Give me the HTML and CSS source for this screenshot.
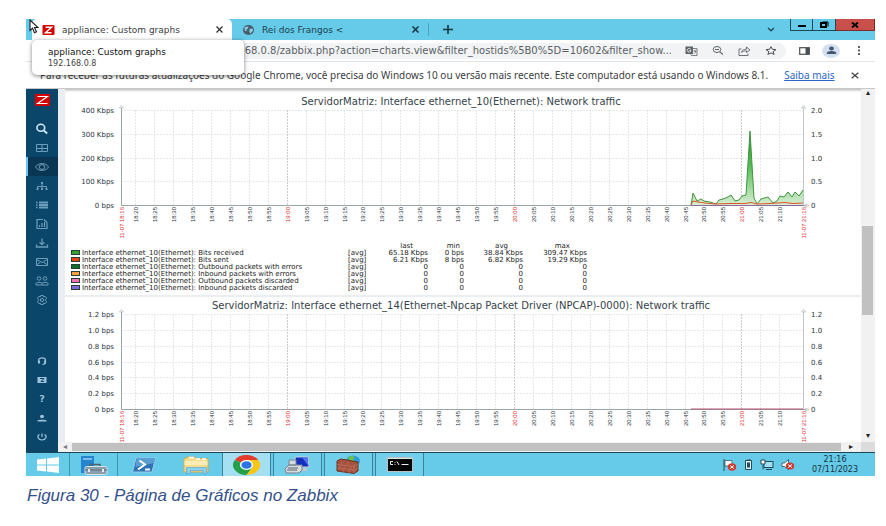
FILE: index.html
```html
<!DOCTYPE html>
<html lang="pt-BR">
<head>
<meta charset="utf-8">
<title>appliance: Custom graphs</title>
<link rel="stylesheet" href="styles.css">
</head>
<body>
<figure class="figure">
  <div class="desktop">
    <header class="tabstrip">
      <div class="tab tab-active">
        <svg class="favicon" viewBox="0 0 12 10"><rect width="12" height="10" rx="1" fill="#d40000"/><path d="M3 2.200h6L3 7.800h6" fill="none" stroke="#fff" stroke-width="1.500"/></svg>
        <span class="tab-title">appliance: Custom graphs</span>
        <button class="plain" aria-label="Fechar guia"><svg width="7" height="7" viewBox="0 0 7 7"><path d="M.5.5l6 6M6.500.5l-6 6" stroke="#333" stroke-width="1.300"/></svg></button>
      </div>
      <div class="tab">
        <svg class="favicon" viewBox="0 0 12 10"><ellipse cx="6" cy="5" rx="5.500" ry="5" fill="#46606e"/><path d="M2 2.500l3-1 1 1.500-2 1 .5 1.500-2 .5zM7 4l3-.5.5 2L8 8.500 7 7z" fill="#8fd0e8"/></svg>
        <span class="tab-title">Rei dos Frangos &lt;</span>
        <button class="plain" aria-label="Fechar guia"><svg width="7" height="7" viewBox="0 0 7 7"><path d="M.5.5l6 6M6.500.5l-6 6" stroke="#16333f" stroke-width="1.500"/></svg></button>
      </div>
      <button class="plain new-tab" aria-label="Nova guia"><svg width="10" height="9" viewBox="0 0 10 9"><path d="M5 0v9M0 4.500h10" stroke="#16333f" stroke-width="1.600"/></svg></button>
      <div class="window-controls">
        <button class="plain tab-search" aria-label="Pesquisar guias"><svg width="8" height="5" viewBox="0 0 8 5"><path d="M1 1l3 2.800L7 1" fill="none" stroke="#23424f" stroke-width="1.300"/></svg></button>
        <button class="win" aria-label="Minimizar"><svg width="8" height="8" viewBox="0 0 8 8"><path d="M0 5h8" stroke="#000" stroke-width="2"/></svg></button>
        <button class="win" aria-label="Restaurar"><svg width="9" height="8" viewBox="0 0 9 8"><path d="M2.500 1h5.500v4.500" fill="none" stroke="#000" stroke-width="1"/><rect x="1" y="2" width="5" height="4" fill="none" stroke="#000" stroke-width="2"/></svg></button>
        <button class="win win-close" aria-label="Fechar"><svg width="8" height="6" viewBox="0 0 8 6"><path d="M1 .5l6 5M7 .5l-6 5" stroke="#000" stroke-width="1.800"/></svg></button>
      </div>
    </header>

    <div class="toolbar">
      <div class="address">
        <input class="url" aria-label="Endereço" value="192.168.0.8/zabbix.php?action=charts.view&amp;filter_hostids%5B0%5D=10602&amp;filter_show...">
        <button class="plain" aria-label="Traduzir"><svg width="13" height="10" viewBox="0 0 13 10"><rect x=".5" y=".5" width="7.500" height="7.500" fill="#5f6368"/><path d="M5.800 3.200a2 1.800 0 1 0 0 2.200V4.500H4.300" fill="none" stroke="#fff" stroke-width=".8"/><path d="M8 2.500h4v7H6.500L5.500 8M8.500 5h3M10 4v1M9 7.800c1-.6 1.500-1.600 1.700-2.800" fill="none" stroke="#5f6368" stroke-width=".8"/></svg></button>
        <button class="plain" aria-label="Zoom"><svg width="12" height="9" viewBox="0 0 12 9"><ellipse cx="5" cy="3.500" rx="3.800" ry="3" fill="none" stroke="#5f6368"/><path d="M3 3.500h4M7.800 5.800l3.200 2.700" stroke="#5f6368" stroke-width="1.100"/></svg></button>
        <button class="plain" aria-label="Compartilhar"><svg width="13" height="10" viewBox="0 0 13 10"><path d="M3.500 3H1v6.500h9V7.500M3.500 6.500C4 4 6 3.200 8.500 3.200V1L12 4 8.500 6.500V4.800C6.500 4.800 5 5.200 3.500 6.500z" fill="none" stroke="#5f6368" stroke-width=".9"/></svg></button>
        <button class="plain" aria-label="Favoritos"><svg width="12" height="9" viewBox="0 0 12 9"><path d="M6 .7l1.400 2.600 3.600.3-2.800 2 .9 2.800L6 6.900 2.900 8.400l.9-2.800L1 3.600l3.600-.3z" fill="none" stroke="#4a4e52" stroke-width="1"/></svg></button>
      </div>
      <button class="plain" aria-label="Painel lateral"><svg width="11" height="8" viewBox="0 0 11 8"><rect x=".7" y=".7" width="9.600" height="6.600" fill="none" stroke="#4a4e52" stroke-width="1.200"/><path d="M6.500 1h3.500v6H6.500z" fill="#4a4e52"/></svg></button>
      <button class="plain avatar" aria-label="Perfil"><svg width="11" height="9" viewBox="0 0 11 9"><ellipse cx="5.500" cy="2.500" rx="2.400" ry="2" fill="#45556b"/><path d="M.8 8V7c0-1.300 3-2 4.700-2s4.700.7 4.700 2v1z" fill="#45556b"/></svg></button>
      <button class="plain" aria-label="Menu"><svg width="4" height="9" viewBox="0 0 4 9"><path d="M1 0h2v2H1zM1 3.500h2v2H1zM1 7h2v2H1z" fill="#5f6368"/></svg></button>
    </div>

    <div class="infobar">
      <p>Para receber as futuras atualizações do Google Chrome, você precisa do Windows 10 ou versão mais recente. Este computador está usando o Windows 8.1.</p>
      <a href="#">Saiba mais</a>
      <button class="plain" aria-label="Dispensar"><svg width="8" height="7" viewBox="0 0 8 7"><path d="M.7.7l6.600 5.600M7.300.7L.7 6.300" stroke="#444" stroke-width="1.200"/></svg></button>
    </div>

    <div class="tooltip" role="tooltip"><strong>appliance: Custom graphs</strong><span>192.168.0.8</span></div>
    <svg class="pointer" width="10" height="15" viewBox="0 0 10 15"><path d="M1 1v10.500l2.500-2.300 2 4.600 2-1-2-4.300H9z" fill="#fff" stroke="#1a1a1a" stroke-width="1.100"/></svg>

    <div class="page">
      <nav class="sidebar" aria-label="Zabbix">
        <a href="#" class="logo" aria-label="Zabbix"><svg width="15" height="12" viewBox="0 0 15 12"><rect width="15" height="12" fill="#d40000"/><path d="M2.500 2.500h10L2.500 9.500h10" fill="none" stroke="#fff" stroke-width="1.100"/></svg></a>
        <ul class="menu">
          <li><a href="#" class="bright" aria-label="Pesquisar"><svg viewBox="0 0 14 12"><ellipse cx="5.800" cy="4.800" rx="3.900" ry="3.500" stroke-width="1.600"/><path d="M8.800 7.500l3.400 3" stroke-width="1.800"/></svg></a></li>
          <li><a href="#" aria-label="Painéis"><svg viewBox="0 0 14 12"><path d="M1.500 2.500h11v7h-11zM7 2.500v7M1.500 6.500H7M7 6.500h5.500"/></svg></a></li>
          <li><a href="#" class="current" aria-label="Monitoramento"><svg viewBox="0 0 14 12"><path d="M.5 6C3 1.500 11 1.500 13.500 6 11 10.500 3 10.500.5 6z"/><ellipse cx="7" cy="6" rx="2.800" ry="2.400"/></svg></a></li>
          <li><a href="#" aria-label="Serviços"><svg viewBox="0 0 14 12"><path d="M7 3.500v5M2.500 8.500v-2h9v2"/><path d="M6 2h2v2H6zM1.500 8h2v2h-2zM6 8h2v2H6zM10.500 8h2v2h-2z" class="solid"/></svg></a></li>
          <li><a href="#" aria-label="Inventário"><svg viewBox="0 0 14 12"><path d="M4 3.500h9M4 6h9M4 8.500h9" stroke-width="1.900"/><path d="M1 3.500h1.500M1 6h1.500M1 8.500h1.500" stroke-width="1.500"/></svg></a></li>
          <li><a href="#" aria-label="Relatórios"><svg viewBox="0 0 14 12"><path d="M8 1.500H2v9h10V4.500M4.500 9V7M7 9V5M9.500 9V4M9 1.500l3 3" stroke-width="1.200"/></svg></a></li>
          <li><a href="#" aria-label="Coleta de dados"><svg viewBox="0 0 14 12"><path d="M1.500 7.500v2.500h11V7.500M7 1.500v6M4.500 5.500L7 7.500l2.500-2" stroke-width="1.300"/></svg></a></li>
          <li><a href="#" aria-label="Alertas"><svg viewBox="0 0 14 12"><path d="M1.500 2.500h11v7h-11zM1.500 3.500L7 6.500l5.500-3M1.500 9l4-3M12.500 9l-4-3"/></svg></a></li>
          <li><a href="#" aria-label="Usuários"><svg viewBox="0 0 14 12"><ellipse cx="4" cy="3.500" rx="1.900" ry="1.700"/><ellipse cx="10" cy="3.500" rx="1.900" ry="1.700"/><path d="M1 10V8.500C1 7 7 7 7 8.500V10M7 8.500C7 7 13 7 13 8.500V10M1 10h12"/></svg></a></li>
          <li><a href="#" aria-label="Administração"><svg viewBox="0 0 14 12"><path d="M5.800 1.500h2.400l.4 1.300 1.700-.3 1.300 1.700-1 1.100v1.400l1 1.100-1.300 1.700-1.700-.3-.4 1.300H5.800l-.4-1.300-1.700.3-1.300-1.700 1-1.100V5.300l-1-1.100 1.300-1.700 1.700.3z"/><ellipse cx="7" cy="6" rx="1.700" ry="1.500"/></svg></a></li>
        </ul>
        <ul class="menu menu-bottom">
          <li><a href="#" aria-label="Suporte"><svg viewBox="0 0 14 12"><path d="M3.500 7V5.500C3.500 2 10.500 2 10.500 5.500V7M10.500 7.500c0 1.500-1 1.800-3 1.800" stroke-width="1.200"/><path d="M3 5.500h2v3H3zM9 5.500h2v3H9z" class="solid"/></svg></a></li>
          <li><a href="#" aria-label="Integrações"><svg viewBox="0 0 14 12"><rect x="2.500" y="3" width="9" height="6" class="solid"/><path d="M5 4.500h4L6 7.500h3" stroke="#0a466a"/></svg></a></li>
          <li><a href="#" class="help" aria-label="Ajuda">?</a></li>
          <li><a href="#" aria-label="Perfil do usuário"><svg viewBox="0 0 14 12"><ellipse cx="7" cy="4.500" rx="2" ry="1.700" class="solid"/><path d="M2.500 9.500V8.500c0-1 9-1 9 0v1z" class="solid"/></svg></a></li>
          <li><a href="#" aria-label="Sair"><svg viewBox="0 0 14 12"><path d="M4.500 3.500C1.500 5 3 9 7 9s5.500-4 2.500-5.500M7 2.500v3.500" stroke-width="1.200"/></svg></a></li>
        </ul>
      </nav>

      <div class="viewport">
        <main class="content">
          <section class="panel panel-first">
            <h2>ServidorMatriz: Interface ethernet_10(Ethernet): Network traffic</h2>
            <svg class="plot" id="plot-ethernet10"></svg>
            <table class="legend">
              <colgroup><col class="c-name"><col class="c-fn"><col class="c-last"><col class="c-min"><col class="c-avg"><col class="c-max"></colgroup>
              <thead><tr><th></th><th></th><th class="h-last">last</th><th class="h-min">min</th><th class="h-avg">avg</th><th class="h-max">max</th></tr></thead>
              <tbody>
                <tr><td><i class="key green"></i>Interface ethernet_10(Ethernet): Bits received</td><td>[avg]</td><td>65.18 Kbps</td><td>0 bps</td><td>38.84 Kbps</td><td>309.47 Kbps</td></tr>
                <tr><td><i class="key red"></i>Interface ethernet_10(Ethernet): Bits sent</td><td>[avg]</td><td>6.21 Kbps</td><td>8 bps</td><td>6.82 Kbps</td><td>19.29 Kbps</td></tr>
                <tr><td><i class="key dark"></i>Interface ethernet_10(Ethernet): Outbound packets with errors</td><td>[avg]</td><td>0</td><td>0</td><td>0</td><td>0</td></tr>
                <tr><td><i class="key orange"></i>Interface ethernet_10(Ethernet): Inbound packets with errors</td><td>[avg]</td><td>0</td><td>0</td><td>0</td><td>0</td></tr>
                <tr><td><i class="key pink"></i>Interface ethernet_10(Ethernet): Outbound packets discarded</td><td>[avg]</td><td>0</td><td>0</td><td>0</td><td>0</td></tr>
                <tr><td><i class="key violet"></i>Interface ethernet_10(Ethernet): Inbound packets discarded</td><td>[avg]</td><td>0</td><td>0</td><td>0</td><td>0</td></tr>
              </tbody>
            </table>
          </section>
          <section class="panel">
            <h2>ServidorMatriz: Interface ethernet_14(Ethernet-Npcap Packet Driver (NPCAP)-0000): Network traffic</h2>
            <svg class="plot" id="plot-ethernet14"></svg>
          </section>
        </main>
        <div class="hscroll"><span class="arrow">◂</span><span class="thumb"></span><span class="arrow dark-arrow">▸</span></div>
      </div>
      <div class="vscroll"><span class="arrow">▴</span><span class="track"><span class="thumb"></span></span><span class="arrow">▾</span><span class="corner"></span></div>
    </div>

    <footer class="taskbar">
      <button class="task start" aria-label="Iniciar"><svg width="24" height="16" viewBox="0 0 24 16"><path d="M1 2.500l9-1v6H1zM11 1.400L23 0v7.500H11zM1 8.500h9v6l-9-1zM11 8.500h12V16l-12-1.400z" fill="#fff"/></svg></button>
      <button class="task first" aria-label="Gerenciador do Servidor"><svg width="28" height="20" viewBox="0 0 28 20"><path d="M1 1h13v17H1z" fill="#2386cf"/><path d="M3 4h9" stroke="#d8f0fb"/><path d="M10 13V9.500h10V13" fill="none" stroke="#52616b" stroke-width="1.500"/><rect x="5" y="11.500" width="22" height="8" rx="1.500" fill="#8b9eac" stroke="#d5e2ea"/><path d="M5 15h22" stroke="#5b6c79"/><path d="M8 14h2v3H8zM22 14h2v3h-2z" fill="#e6edf0"/></svg></button>
      <button class="task" aria-label="PowerShell"><svg width="26" height="16" viewBox="0 0 26 16"><path d="M5 1h19.500L21 15H1.500z" fill="#2d73b5" stroke="#9ccbe9"/><path d="M5.500 1.500h18.500L23 6 4.500 10z" fill="#5b9dd2"/><path d="M8.500 3.500l5.500 4-7 5M14 12.500h5" fill="none" stroke="#fff" stroke-width="2"/></svg></button>
      <button class="task" aria-label="Explorador de Arquivos"><svg width="27" height="18" viewBox="0 0 27 18"><path d="M1 2.500h2L4 1h8l1 1.500h12V16H1z" fill="#f3dc8e" stroke="#d0ae51"/><path d="M6 1.500h5M13 3h4M19 3h4" stroke="#fff" stroke-width="1.500"/><path d="M1.500 5h23v4h-23z" fill="#fbedb5"/><path d="M3.500 17.500v-6h20v6h-3.500V14.500H7.500v3z" fill="#8bd2f2" stroke="#5aaad4" stroke-width=".7"/></svg></button>
      <button class="task active" aria-label="Google Chrome"><svg width="28" height="20" viewBox="0 0 28 20"><g transform="scale(1.350 1)"><path d="M10 10L1.400 5A9.900 9.900 0 0 1 18.700 5z" fill="#e33b2e"/><path d="M10 10L1.400 5A9.900 9.900 0 0 0 10 19.900L14.300 12.500z" fill="#24a04a"/><path d="M10 5h8.700A9.900 9.900 0 0 1 10 19.900l4.300-7.400z" fill="#fbc516"/><circle cx="10" cy="10" r="4.900" fill="#fff"/><circle cx="10" cy="10" r="3.800" fill="#2f74e0"/></g></svg></button>
      <button class="task boxed" aria-label="Área de Trabalho Remota"><svg width="27" height="18" viewBox="0 0 27 18"><path d="M11 1h13l1 10H12z" fill="#1430bf" stroke="#c8d4e2"/><path d="M18 1.500h5.500l.8 8z" fill="#5176ec"/><path d="M16 12h6l2 3h-9z" fill="#bac6d0"/><path d="M5 4h7v5H5zM1 13l4-4h13v5l-3 3H2z" fill="#d5dadd" stroke="#77838c"/><path d="M4 12h10M3 14h10" stroke="#59646c"/></svg></button>
      <button class="task boxed" aria-label="Firewall"><svg width="25" height="19" viewBox="0 0 25 19"><ellipse cx="17" cy="6" rx="7" ry="5.500" fill="#2e9cdb"/><path d="M12 2.500c3-2 5-2 7 0l-2 2.500 3 2v4h-4z" fill="#67c449"/><path d="M1 6l4-2 17 3v9l-4 2.500L1 16z" fill="#a4513e" stroke="#6f3023"/><path d="M1 9.500l17 2 4-2M1 13l17 2 4-2M6 6.500v3.500M12 7v4M4 10v3.500M9 10.500V14M15 11v4M7 13.500v3.500M13 14.500v3.500M18 9v9" stroke="#c07a66" stroke-width=".6" fill="none"/></svg></button>
      <button class="task boxed" aria-label="Prompt de Comando"><svg width="26" height="15" viewBox="0 0 26 15"><rect x=".5" y=".5" width="25" height="14" fill="#050505" stroke="#b9c1c5"/><path d="M1 1.500h24" stroke="#dfe5e7"/><path d="M6 4.500H3.500v3H6M8 5v.8M8 7v.8M10 4.500l2 3.500M14.500 7.500h7" fill="none" stroke="#eee"/></svg></button>
      <div class="tray">
        <svg width="15" height="12" viewBox="0 0 15 12"><path d="M2 0v12" stroke="#234a5a"/><path d="M3 1.500h7v5.500H3z" fill="#fff" stroke="#234a5a" stroke-width=".7"/><ellipse cx="10" cy="8" rx="4.200" ry="3.700" fill="#d33a2e"/><path d="M8.200 6.500l3.600 3M11.800 6.500l-3.600 3" stroke="#fff"/></svg>
        <svg width="9" height="11" viewBox="0 0 9 11"><path d="M1.500 1.500h6v9h-6zM3 0h3v1.500" fill="#dff4fb" stroke="#234a5a"/><path d="M3 3.500h3v5H3z" fill="#234a5a"/></svg>
        <svg width="14" height="11" viewBox="0 0 14 11"><rect x="4" y="2.500" width="9" height="6" fill="#a4e0f3" stroke="#234a5a"/><path d="M6 10.500h6M3 6v4.500" stroke="#234a5a"/><path d="M1 1h4v4H1z" fill="#fff" stroke="#234a5a"/></svg>
        <svg width="14" height="11" viewBox="0 0 14 11"><path d="M1 4h2.500l4-3.500v10L3.500 7.500H1z" fill="#fff" stroke="#234a5a" stroke-width=".8"/><ellipse cx="9" cy="7" rx="4.200" ry="3.600" fill="#d33a2e"/><path d="M7.200 5.500l3.600 3M10.800 5.500l-3.600 3" stroke="#fff"/></svg>
      </div>
      <div class="clock"><span>21:16</span><span>07/11/2023</span></div>
    </footer>
  </div>
  <figcaption>Figura 30 - Página de Gráficos no Zabbix</figcaption>
</figure>
<script src="charts.js"></script>
</body>
</html>
```
FILE: styles.css
```css
* { box-sizing: border-box; }
body {
  margin: 0;
  background: #fff;
  font-family: "DejaVu Sans", "Liberation Sans", sans-serif;
  font-size: 8px;
  color: #222;
}
.figure { margin: 19px 11px 0 26px; }
.desktop { position: relative; }
button, input { font: inherit; color: inherit; }
.plain {
  display: flex;
  align-items: center;
  justify-content: center;
  padding: 0;
  border: 0;
  background: none;
}
svg { display: block; flex: none; }

.tabstrip { display: flex; align-items: stretch; height: 21px; padding-left: 6px; background: #65cbe9; }
.tab { display: flex; align-items: center; width: 200px; padding: 0 9px 0 10px; color: #1d3c49; }
.tab-active { background: #fff; border-radius: 5px 5px 0 0; color: #3c4043; }
.tab + .tab { width: 197px; border-right: 1px solid #4aa3bf; margin: 4px 0; }
.tab-title { flex: 1; font-size: 9px; white-space: nowrap; }
.favicon { width: 13px; height: 10px; margin-right: 7px; }
.new-tab { width: 38px; }
.window-controls { display: flex; align-items: flex-start; margin-left: auto; }
.tab-search { width: 38px; height: 20px; }
.win {
  display: flex;
  align-items: center;
  justify-content: center;
  width: 23px;
  height: 12px;
  padding: 0;
  border: 1px solid #1f4653;
  border-width: 0 1px 1px 0;
  background: #65cbe9;
}
.tab-search + .win { border-left-width: 1px; }
.win-close { width: 39px; background: #c9504a; border-color: #7c2c28; }

.toolbar { display: flex; align-items: center; height: 22px; padding: 0 14px 0 110px; background: #fff; border-bottom: 1px solid #e3e5e7; }
.address { display: flex; align-items: center; gap: 14px; flex: 1; height: 16px; padding-right: 9px; border-radius: 8px; background: #f1f3f4; margin-right: 13px; }
.url { flex: 1; min-width: 0; height: 16px; padding: 0 0 0 80px; border: 0; background: none; font-size: 10px; line-height: 16px; color: #5b5f64; outline: 0; }
.avatar { width: 18px; height: 14px; margin: 0 17px 0 12px; border-radius: 50%; background: #d3e0f2; }

.infobar { display: flex; align-items: center; height: 27px; padding: 0 16px 0 14px; background: #fff; border-bottom: 1px solid #c8c8c8; font-family: "Noto Sans", sans-serif; font-size: 10px; color: #3c4043; white-space: nowrap; }
.infobar p { margin: 0; }
.infobar a { margin-left: 16px; color: #2a66c8; }
.infobar button { margin-left: auto; }

.tooltip {
  position: absolute;
  left: 6px;
  top: 21px;
  display: flex;
  flex-direction: column;
  width: 212px;
  height: 35px;
  padding: 6px 16px;
  border-radius: 5px;
  background: #fff;
  box-shadow: 0 1px 4px rgba(0, 0, 0, .5);
  line-height: 12px;
}
.tooltip strong { font-size: 9px; font-weight: 400; color: #111; }
.tooltip span { color: #444; }
.pointer { position: absolute; left: 3px; top: 0; }

.page { display: flex; height: 363px; background: #ebeef0; }
.sidebar { display: flex; flex-direction: column; width: 32px; background: #0a466a; }
.logo { display: flex; justify-content: center; padding: 5px 0 13px 1px; }
.menu { margin: 0; padding: 0; list-style: none; }
.menu-bottom { margin-top: auto; padding-bottom: 6px; }
.menu a {
  display: flex;
  align-items: center;
  justify-content: center;
  height: 19px;
  border-left: 2px solid transparent;
  padding-right: 2px;
  color: #6c9dbb;
  text-decoration: none;
}
.menu svg { width: 14px; height: 12px; fill: none; stroke: currentColor; stroke-width: 1; }
.menu .solid { fill: currentColor; stroke: none; }
.menu .bright { color: #d3e8f5; }
.menu .current { background: #083653; border-left-color: #6cc3f5; }
.menu-bottom a { color: #9dc3da; }
.menu .help { font-size: 9px; font-weight: 700; }

.viewport { display: flex; flex-direction: column; flex: 1; min-width: 0; }
.content { display: flex; flex-direction: column; gap: 2px; flex: 1; min-height: 0; overflow: hidden; padding-left: 7px; }
.panel { flex: none; padding-top: 4px; background: #fff; }
.panel-first { padding-top: 8px; height: 206px; box-shadow: inset 0 3px 3px -2px #aaa; }
.panel h2 { width: 792px; margin: 0; font-size: 10px; line-height: 10px; font-weight: 400; text-align: center; color: #36434a; white-space: nowrap; }
.plot { width: 792px; height: 132px; overflow: visible; }
.plot text { font-size: 7px; fill: #2a3338; }
.plot .time { font-family: "Liberation Sans", Arial, sans-serif; font-size: 6px; text-anchor: end; }
.plot .major { fill: #e02a2a; }

.legend { table-layout: fixed; width: 516px; height: 49px; margin: 4px 0 0 6px; border-collapse: collapse; font-size: 7px; line-height: 7px; white-space: nowrap; }
.legend td, .legend th { padding: 0; font-weight: 400; text-align: right; }
.legend td:nth-child(-n+2) { text-align: left; }
.c-name { width: 277px; }
.c-fn { width: 24px; }
.c-last { width: 56px; }
.c-min { width: 36px; }
.c-avg { width: 59px; }
.c-max { width: 64px; }
.legend .h-last, .legend .h-avg { padding-right: 15px; }
.legend .h-min { padding-right: 4px; }
.legend .h-max { padding-right: 17px; }
.key { display: inline-block; width: 9px; height: 5px; margin-right: 2px; outline: 1px solid #28403a; outline-offset: -1px; }
.green { background: #35a12c; }
.red { background: #f0420f; }
.dark { background: #0c7028; }
.orange { background: #f7a13b; }
.pink { background: #f272b0; }
.violet { background: #8168dc; }

.hscroll { display: flex; align-items: center; height: 10px; background: #f1f1f1; }
.hscroll .thumb { flex: 1; height: 8px; background: #c1c1c1; }
.arrow { width: 14px; font-size: 8px; line-height: 8px; text-align: center; color: #777; }
.hscroll .dark-arrow { width: 20px; color: #222; }
.vscroll { display: flex; flex-direction: column; width: 14px; background: #f1f1f1; }
.vscroll .arrow { height: 10px; color: #222; }
.vscroll .track { flex: 1; padding: 127px 2px 0 1px; }
.vscroll .thumb { display: block; height: 89px; background: #c1c1c1; }
.vscroll .corner { height: 10px; background: #dcdcdc; }

.taskbar { display: flex; align-items: stretch; height: 24px; border-top: 1px solid #1d4757; background: #65cbe9; }
.task { display: flex; align-items: center; justify-content: center; width: 52px; padding: 0; border: 0; background: none; }
.start { width: 43px; }
.first { width: 49px; border: 1px solid #3f93ad; border-width: 0 1px; }
.active { width: 49px; background: #a5dff2; border: 1px solid #3a8199; border-width: 0 1px; }
.boxed { width: 49px; margin-left: 2px; border: 1px solid #3a8199; border-width: 0 1px; background: #71cfeb; }
.tray { display: flex; align-items: center; gap: 7px; margin-left: auto; }
.clock { display: flex; flex-direction: column; width: 80px; padding-top: 2px; line-height: 10px; text-align: center; color: #16323e; }

figcaption { margin: 10px 0 0 1px; font-family: "Liberation Sans", Arial, sans-serif; font-size: 17px; line-height: 20px; font-style: italic; color: #33508a; }
```
FILE: charts.js
```js
const NS = "http://www.w3.org/2000/svg";
const LEFT = 56, RIGHT = 738, TOP = 3, BOTTOM = 98;
const START = 18 * 60 + 16, END = 21 * 60 + 16;

function add(parent, name, attrs, text) {
  const el = document.createElementNS(NS, name);
  for (const key in attrs) el.setAttribute(key, attrs[key]);
  if (text) el.textContent = text;
  parent.appendChild(el);
  return el;
}

function timeX(minute) {
  return Math.round(LEFT + (minute - START) / (END - START) * (RIGHT - LEFT)) - 0.5;
}

function timeLabel(svg, x, text, major) {
  add(svg, "text", {
    class: major ? "time major" : "time",
    transform: `translate(${x + 2.5} ${BOTTOM + 2}) rotate(-90)`
  }, text);
}

function drawAxes(svg, leftLabels, rightLabels) {
  const step = (BOTTOM - TOP) / (leftLabels.length - 1);
  leftLabels.forEach((label, i) => {
    const y = Math.round(BOTTOM - i * step);
    if (i) add(svg, "path", { d: `M${LEFT} ${y + 0.5}H${RIGHT}`, stroke: "#e6e9ea", "stroke-dasharray": "2 1" });
    add(svg, "text", { x: LEFT - 7, y: y + 3, "text-anchor": "end" }, label);
    add(svg, "text", { x: RIGHT + 8, y: y + 3 }, rightLabels[i]);
  });
  timeLabel(svg, LEFT, "11-07 18:16", true);
  for (let m = START + 4; m < END - 5; m += 5) {
    const x = timeX(m), hour = m % 60 === 0;
    add(svg, "path", { d: `M${x} ${TOP}V${BOTTOM}`, stroke: hour ? "#c9cccf" : "#e4e7e9", "stroke-dasharray": "2 1" });
    timeLabel(svg, x, `${Math.floor(m / 60)}:${String(m % 60).padStart(2, "0")}`, hour);
  }
  timeLabel(svg, RIGHT, "11-07 21:16", true);
  add(svg, "path", { d: `M${LEFT + 0.5} ${TOP - 2}V${BOTTOM + 0.5}H${RIGHT + 3}`, fill: "none", stroke: "#9aa6a6" });
  add(svg, "path", { d: `M${RIGHT + 0.5} ${TOP - 2}V${BOTTOM}`, stroke: "#c0c6cc" });
  for (const x of [LEFT, RIGHT]) {
    add(svg, "path", { d: `M${x - 1.5} ${TOP - 2}h4l-2 -2.500z`, fill: "#fff", stroke: "#b0b6b8", "stroke-width": 0.7 });
  }
  add(svg, "path", { d: `M${RIGHT + 3} ${BOTTOM - 1}v3l3 -1.500z`, fill: "#fff", stroke: "#b0b6b8", "stroke-width": 0.7 });
}

const first = document.getElementById("plot-ethernet10");
drawAxes(first, ["0 bps", "100 Kbps", "200 Kbps", "300 Kbps", "400 Kbps"], ["0", "0.5", "1.0", "1.5", "2.0"]);

const received = "626,98 628,86 632,94 636,92 639,94 645,95 651,97 654,93 658,92 663,90 666,88 670,94 674,93 677,89 681,88 685,24 689,91 692,97 696,92 703,90 708,96 712,94 715,89 719,90 723,85 727,90 730,85 734,89 738,83";
const sent = "626,98 628,94 633,95 640,96 650,97 665,96.500 680,96.500 686,95.500 692,97 705,96.500 720,95.500 728,96.500 738,96";
const gradient = add(add(first, "defs", {}), "linearGradient", { id: "fade", gradientUnits: "userSpaceOnUse", x1: 0, y1: 24, x2: 0, y2: 98 });
add(gradient, "stop", { offset: 0, "stop-color": "#1f9a1f" });
add(gradient, "stop", { offset: 0.45, "stop-color": "#55b955" });
add(gradient, "stop", { offset: 1, "stop-color": "#d6efd2" });
add(first, "polygon", { points: `${received} 738,98`, fill: "url(#fade)" });
add(first, "polyline", { points: received, fill: "none", stroke: "#3f9440", "stroke-width": 1 });
add(first, "polyline", { points: sent, fill: "none", stroke: "#e0512c", "stroke-width": 1 });
add(first, "path", { d: "M626 98.500H738", stroke: "#8a6a9a" });

const second = document.getElementById("plot-ethernet14");
drawAxes(second, ["0 bps", "0.2 bps", "0.4 bps", "0.6 bps", "0.8 bps", "1.0 bps", "1.2 bps"], ["0", "0.2", "0.4", "0.6", "0.8", "1.0", "1.2"]);
add(second, "path", { d: "M626 98H738", stroke: "#b5506e", "stroke-width": 1.2 });
```
